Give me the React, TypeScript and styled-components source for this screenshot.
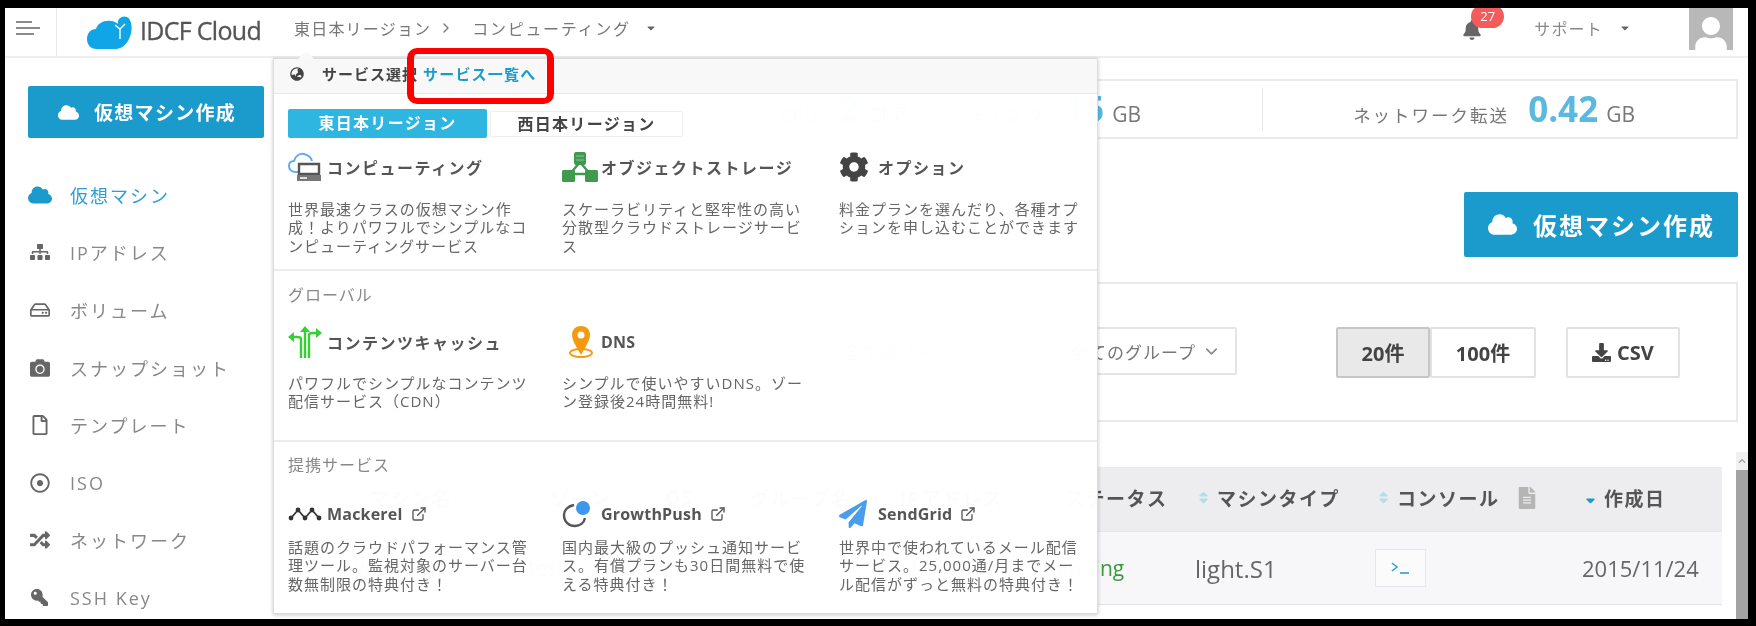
import * as React from 'react'
import styled, { createGlobalStyle } from 'styled-components'
import {
  FaBell,
  FaCamera,
  FaCaretDown,
  FaChevronUp,
  FaCloud,
  FaCog,
  FaDownload,
  FaFileAlt,
  FaGlobeAsia,
  FaKey,
  FaPaperPlane,
  FaRandom,
  FaRegDotCircle,
  FaRegFile,
  FaRegHdd,
  FaSitemap,
  FaSort,
  FaSortDown,
  FaUser,
} from 'react-icons/fa'
import { FiChevronDown, FiChevronRight, FiExternalLink } from 'react-icons/fi'

const GlobalStyle = createGlobalStyle`
  html, body {
    margin: 0;
    padding: 0;
    background: #000;
  }
  body {
    font-family: "Open Sans", "Noto Sans CJK JP", sans-serif;
    color: #666;
  }
  * { box-sizing: border-box; }
`

const Screen = styled.div`
  width: 1756px;
  height: 626px;
  padding: 8px 8px 7px 5px;
  background: #000;
  overflow: hidden;
`

const Frame = styled.div`
  position: relative;
  width: 1743px;
  height: 611px;
  background: #fff;
  overflow: hidden;
  filter: blur(0.4px);
`

/* header */
const Header = styled.header`
  display: flex;
  align-items: center;
  height: 50px;
  border-bottom: 2px solid #eee;
`

const MenuCell = styled.div`
  display: flex;
  flex-direction: column;
  gap: 4px;
  justify-content: center;
  width: 52px;
  height: 100%;
  padding: 0 0 8px 11px;
  border-right: 1px solid #e8e8e8;
`

const MenuBar = styled.span<{ $w: number }>`
  display: block;
  width: ${(p) => p.$w}px;
  height: 2px;
  background: #8a8a8a;
`

const Logo = styled.div`
  display: flex;
  align-items: center;
  margin-left: 30px;
  width: 207px;
  gap: 7px;
`

const LogoText = styled.span`
  position: relative;
  top: -2px;
  font-size: 25px;
  font-weight: 400;
  letter-spacing: -0.7px;
  color: #555;
  -webkit-text-stroke: 0.3px #555;
  white-space: nowrap;
`

const Crumbs = styled.div`
  display: flex;
  align-items: center;
  height: 100%;
  padding-bottom: 9px;
  font-size: 16px;
  letter-spacing: 1.2px;
  color: #777;
  white-space: nowrap;
`

const CrumbPart = styled.span<{ $wide?: boolean }>`
  letter-spacing: ${(p) => (p.$wide ? 1.7 : 1.2)}px;
`

const CrumbSep = styled.span`
  display: flex;
  margin: 0 18px 0 7px;
  font-size: 16px;
  color: #777;
`

const CrumbCaret = styled.span`
  display: flex;
  margin-left: 14px;
  font-size: 12px;
  color: #666;
`

const HeaderRight = styled.div`
  display: flex;
  align-items: center;
  margin-left: auto;
  height: 100%;
`

const Bell = styled.div`
  position: relative;
  top: -2px;
  display: flex;
  margin-right: 52px;
  color: #666;
  font-size: 20px;
`

const Badge = styled.span`
  position: absolute;
  left: 9px;
  top: -15px;
  width: 33px;
  height: 23px;
  border-radius: 12px;
  background: #f25c5c;
  color: #fff;
  font-size: 13px;
  line-height: 23px;
  text-align: center;
`

const Support = styled.div`
  display: flex;
  align-items: center;
  height: 100%;
  padding-bottom: 9px;
  font-size: 16px;
  letter-spacing: 1.2px;
  color: #888;
  svg { font-size: 12px; color: #666; margin-left: 16px; }
`

const Avatar = styled.div`
  display: flex;
  align-items: flex-end;
  justify-content: center;
  width: 44px;
  height: 42px;
  align-self: flex-start;
  margin: 0 15px 0 58px;
  background: #b8b8b8;
  color: #fff;
  font-size: 36px;
  overflow: hidden;
  svg { margin-bottom: -3px; }
`

/* body */
const Body = styled.div`
  display: flex;
  height: 561px;
`

const Sidebar = styled.nav`
  flex: 0 0 268px;
  padding: 28px 9px 0 23px;
`

const CreateButton = styled.div<{ $big?: boolean }>`
  display: flex;
  align-items: center;
  width: ${(p) => (p.$big ? 274 : 236)}px;
  height: ${(p) => (p.$big ? 65 : 52)}px;
  padding-left: ${(p) => (p.$big ? 24 : 30)}px;
  gap: ${(p) => (p.$big ? 16 : 15)}px;
  border-radius: 2px;
  background: #1a9bcb;
  color: #fff;
  font-size: ${(p) => (p.$big ? 24 : 19)}px;
  font-weight: 700;
  letter-spacing: ${(p) => (p.$big ? 2 : 1.3)}px;
  white-space: nowrap;
  svg { font-size: ${(p) => (p.$big ? 29 : 21)}px; }
`

const NavList = styled.ul`
  list-style: none;
  margin: 28px 0 0;
  padding: 0;
`

const NavItem = styled.li<{ $active?: boolean }>`
  display: flex;
  align-items: center;
  height: 57.6px;
  font-size: 18px;
  letter-spacing: 2px;
  color: ${(p) => (p.$active ? '#2a9fd0' : '#888')};
  white-space: nowrap;
`

const NavIcon = styled.span<{ $active?: boolean; $flip?: boolean }>`
  display: flex;
  justify-content: center;
  width: 24px;
  margin-right: 18px;
  font-size: ${(p) => (p.$active ? 24 : p.$flip ? 17 : 20)}px;
  color: ${(p) => (p.$active ? '#1a9bcb' : '#666')};
  transform: ${(p) => (p.$flip ? 'scaleX(-1)' : 'none')};
`

const Main = styled.main`
  flex: 1;
  padding: 21px 10px 0 27px;
  min-width: 0;
`

const Card = styled.section`
  border: 2px solid #eaeaea;
`

const StatsCard = styled(Card)`
  display: grid;
  grid-template-columns: 1fr 313px 473px;
  height: 60px;
  align-items: center;
`

const Stat = styled.div<{ $divider?: boolean; $pad: number }>`
  display: flex;
  align-items: baseline;
  justify-content: flex-end;
  height: 42px;
  padding-right: ${(p) => p.$pad}px;
  line-height: 42px;
  font-size: 17.5px;
  letter-spacing: 2px;
  color: #777;
  white-space: nowrap;
  border-right: ${(p) => (p.$divider ? '1px solid #e5e5e5' : 'none')};
`

const StatValue = styled.b`
  margin: 0 8px 0 19px;
  font-size: 35px;
  font-weight: 700;
  letter-spacing: 0;
  color: #5bb8de;
`

const StatUnit = styled.span`
  font-size: 21px;
  letter-spacing: 0;
`

const TitleRow = styled.div`
  display: flex;
  align-items: center;
  justify-content: space-between;
  margin: 53px 0 25px;
`

const PageTitle = styled.h1`
  margin: 0;
  padding-left: 20px;
  font-size: 34px;
  font-weight: 400;
  color: #555;
`

const FilterCard = styled(Card)`
  display: flex;
  align-items: flex-start;
  height: 140px;
  padding: 43px 56px 0 95px;
`

const SearchBox = styled.div`
  width: 395px;
  height: 48px;
  border: 2px solid #e5e5e5;
`

const Select = styled.div<{ $w: number }>`
  display: flex;
  align-items: center;
  justify-content: space-between;
  width: ${(p) => p.$w}px;
  height: 48px;
  margin-left: 10px;
  padding: 0 14px 0 40px;
  border: 2px solid #e5e5e5;
  border-radius: 2px;
  font-size: 17px;
  letter-spacing: 1px;
  color: #777;
  white-space: nowrap;
  svg { flex: none; font-size: 19px; color: #888; }
`

const Spacer = styled.div`
  flex: 1;
`

const PagerButton = styled.div<{ $active?: boolean; $w: number }>`
  display: flex;
  align-items: center;
  justify-content: center;
  gap: 6px;
  width: ${(p) => p.$w}px;
  height: 51px;
  border: 2px solid ${(p) => (p.$active ? '#c4c6c8' : '#e2e2e2')};
  border-radius: 2px;
  background: ${(p) => (p.$active ? '#e9e9e9' : '#fff')};
  font-size: 20px;
  font-weight: 700;
  color: #444;
  white-space: nowrap;
`

const CsvButton = styled(PagerButton)`
  margin-left: 30px;
  svg { font-size: 19px; }
`

const Table = styled.div`
  margin: 45px 16px 0 -2px;
`

const TableRow = styled.div<{ $head?: boolean }>`
  display: grid;
  grid-template-columns: 50px 180px 115px 85px 150px 165px 152px 180px 207px 138px;
  align-items: center;
  height: ${(p) => (p.$head ? 65 : 73)}px;
  background: ${(p) => (p.$head ? '#ededef' : '#f7f7f9')};
  border-bottom: 1px solid ${(p) => (p.$head ? '#e6e6e8' : '#e4e4e6')};
`

const HeadCell = styled.div`
  display: flex;
  align-items: center;
  gap: 6px;
  padding: 0 0 3px 1px;
  font-size: 19px;
  font-weight: 700;
  letter-spacing: 1.5px;
  color: #555;
  white-space: nowrap;
`

const SortMark = styled.span<{ $active?: boolean }>`
  display: flex;
  font-size: 15px;
  color: ${(p) => (p.$active ? '#1a9bcb' : '#b5dcea')};
`

const DocMark = styled.span`
  display: flex;
  margin-left: 10px;
  font-size: 22px;
  color: #b5b5b5;
`

const Cell = styled.div<{ $color?: string; $size?: number }>`
  font-size: ${(p) => p.$size ?? 21}px;
  color: ${(p) => p.$color ?? '#666'};
  white-space: nowrap;
`

const ConsoleButton = styled.div`
  display: flex;
  align-items: center;
  justify-content: center;
  width: 51px;
  height: 38px;
  border: 1px solid #e5e6e8;
  background: #fbfbfc;
`

const Scrollbar = styled.div`
  position: absolute;
  right: 0;
  top: 444px;
  width: 12px;
  height: 167px;
  background: #f1f1f1;
`

const ScrollArrow = styled.div`
  display: flex;
  justify-content: center;
  height: 18px;
  padding-top: 5px;
  font-size: 8px;
  color: #a0a0a0;
`

const ScrollThumb = styled.div`
  height: 149px;
  background: #a3a3a3;
`

/* dropdown */
const Panel = styled.div`
  position: absolute;
  left: 268px;
  top: 50px;
  width: 825px;
  height: 556px;
  border: 1px solid #ddd;
  background: rgba(255, 255, 255, 0.985);
  box-shadow: 0 1px 4px rgba(0, 0, 0, 0.22);
  &:before {
    content: '';
    position: absolute;
    left: 24px;
    top: -8px;
    border: 8px solid transparent;
    border-top: 0;
    border-bottom-color: #f9f9f9;
  }
`

const PanelStrip = styled.div`
  display: flex;
  align-items: center;
  height: 35px;
  padding: 0 0 5px 16px;
  background: #f8f8f8;
  border-bottom: 1px solid #e8e8e8;
  font-size: 15px;
  font-weight: 700;
  letter-spacing: 1px;
  color: #444;
  white-space: nowrap;
`

const Globe = styled.span`
  display: flex;
  margin-right: 18px;
  font-size: 14px;
  color: #444;
`

const ListLink = styled.span`
  margin-left: 5px;
  letter-spacing: 1.2px;
  color: #1a9bcb;
`

const RedBox = styled.div`
  position: absolute;
  left: 133px;
  top: -11px;
  width: 147px;
  height: 56px;
  border: solid #f00;
  border-width: 6px 7px;
  border-radius: 10px;
`

const PanelSection = styled.div<{ $top: number; $h: number; $last?: boolean }>`
  height: ${(p) => p.$h}px;
  padding: ${(p) => p.$top}px 0 0 14px;
  border-bottom: ${(p) => (p.$last ? 'none' : '2px solid #ececec')};
`

const Tabs = styled.div`
  display: flex;
  align-items: center;
  gap: 3px;
  margin-bottom: 15px;
`

const Tab = styled.div<{ $active?: boolean }>`
  width: ${(p) => (p.$active ? 199 : 193)}px;
  height: ${(p) => (p.$active ? 29 : 26)}px;
  border: ${(p) => (p.$active ? 'none' : '1px solid #eee')};
  border-radius: 2px;
  background: ${(p) => (p.$active ? '#2fb6e0' : '#fff')};
  color: ${(p) => (p.$active ? '#fff' : '#444')};
  font-size: 16px;
  font-weight: 700;
  letter-spacing: 1.3px;
  line-height: ${(p) => (p.$active ? 29 : 24)}px;
  text-align: center;
`

const SectionLabel = styled.div`
  height: 24px;
  font-size: 16px;
  line-height: 24px;
  letter-spacing: 1px;
  color: #888;
`

const ServiceGrid = styled.div<{ $top: number }>`
  display: grid;
  grid-template-columns: 274px 277px 240px;
  margin-top: ${(p) => p.$top}px;
`

const Service = styled.div``

const ServiceTitle = styled.div<{ $latin?: boolean }>`
  display: flex;
  align-items: center;
  height: 28px;
  font-size: 16px;
  font-weight: 700;
  letter-spacing: ${(p) => (p.$latin ? 0.2 : 1.5)}px;
  color: #555;
  white-space: nowrap;
  svg.ext {
    margin-left: 8px;
    font-size: 16px;
  }
`

const ServiceIcon = styled.span`
  display: flex;
  align-items: center;
  flex: 0 0 39px;
`

const ServiceText = styled.p<{ $gap: number }>`
  margin: ${(p) => p.$gap}px 0 0;
  font-size: 15px;
  line-height: 18.3px;
  letter-spacing: 1px;
  color: #666;
  white-space: pre-line;
`

const LogoMark = () => (
  <svg width="46" height="34" viewBox="0 0 46 34">
    <path
      fill="#0fa5e6"
      d="M10 34C3 34 0 29 0 24C0 18 4 14 9 14C11 8 17 5 24 6C27 6 30 8 31 9C30 3 36 0 40 2C46 5 46 18 41 26C37 32 33 34 28 34Z"
    />
    <path fill="none" stroke="#fff" strokeWidth="1.4" d="M28 10L33 14L38 9M33 14V24" />
  </svg>
)

const ComputeIcon = () => (
  <svg width="36" height="30" viewBox="0 0 36 30">
    <path
      fill="none"
      stroke="#63aeea"
      strokeWidth="2"
      d="M13 20H8C3 20 1 17 1 14C1 11 3 9 6 9C7 4 12 1 16 2C20 3 23 5 24 9"
    />
    <path fill="#fff" stroke="#555" strokeWidth="2.4" d="M11 12H31V22H11Z" />
    <path fill="#777" d="M9 23H33V29H9Z" />
    <path fill="#ddd" d="M12 25H19V27H12Z" />
  </svg>
)

const StorageIcon = () => (
  <svg width="36" height="30" viewBox="0 0 36 30">
    <path fill="none" stroke="#3f9a4d" strokeWidth="2.4" d="M18 10L8 22H28Z" />
    <rect x="12" y="0" width="12" height="13" rx="2" fill="#3f9a4d" />
    <path stroke="#8cc795" strokeWidth="1" d="M14 4H22M14 8H22" />
    <rect x="0" y="18" width="13" height="12" rx="1.5" fill="#3f9a4d" />
    <rect x="23" y="18" width="13" height="12" rx="1.5" fill="#3f9a4d" />
  </svg>
)

const CacheIcon = () => (
  <svg width="34" height="32" viewBox="0 0 34 32">
    <g fill="none" stroke="#35d035" strokeWidth="2.4">
      <path d="M13 32V13C13 11 11 11 9 11H4" />
      <path d="M17 32V3" />
      <path d="M21 32V9C21 7 23 7 25 7H29" />
    </g>
    <path fill="#35d035" d="M0 11L6 6V16ZM17 0L22 6H12ZM34 7L28 2V12Z" />
  </svg>
)

const PinIcon = () => (
  <svg width="32" height="32" viewBox="-6 0 32 32">
    <ellipse cx="13" cy="27" rx="11" ry="4" fill="none" stroke="#f59a10" strokeWidth="1.8" />
    <path
      fill="#f59a10"
      fillRule="evenodd"
      d="M13 0C7 0 4 4 4 9C4 15 10 23 13 29C16 23 22 15 22 9C22 4 19 0 13 0ZM13 5.5A3.5 3.5 0 1 1 13 12.5A3.5 3.5 0 1 1 13 5.5Z"
    />
  </svg>
)

const MackerelIcon = () => (
  <svg width="34" height="14" viewBox="0 0 34 14">
    <path fill="none" stroke="#333" strokeWidth="1.8" d="M3 11L10 3L17 11L24 3L31 11" />
    <g fill="#333">
      <circle cx="3" cy="11" r="2.4" />
      <circle cx="10" cy="3" r="2.4" />
      <circle cx="17" cy="11" r="2.4" />
      <circle cx="24" cy="3" r="2.4" />
      <circle cx="31" cy="11" r="2.4" />
    </g>
  </svg>
)

const GrowthIcon = () => (
  <svg width="30" height="28" viewBox="0 0 30 28">
    <path fill="none" stroke="#555" strokeWidth="2.4" d="M12 5C6 6 2 10 2 15C2 22 7 26 13 26C18 26 22 23 23 18" />
    <circle cx="21" cy="8" r="7" fill="#3c97ee" />
  </svg>
)

const PromptIcon = () => (
  <svg width="20" height="14" viewBox="0 0 20 14">
    <path fill="none" stroke="#2a9fd0" strokeWidth="1.5" d="M1 2L6 6L1 10" />
    <path stroke="#2a9fd0" strokeWidth="1.6" d="M9 12H18" />
  </svg>
)

const navItems = [
  { label: '仮想マシン', icon: <FaCloud />, active: true },
  { label: 'IPアドレス', icon: <FaSitemap /> },
  { label: 'ボリューム', icon: <FaRegHdd /> },
  { label: 'スナップショット', icon: <FaCamera /> },
  { label: 'テンプレート', icon: <FaRegFile /> },
  { label: 'ISO', icon: <FaRegDotCircle /> },
  { label: 'ネットワーク', icon: <FaRandom /> },
  { label: 'SSH Key', icon: <FaKey />, flip: true },
]

const services = [
  {
    title: 'コンピューティング',
    icon: <ComputeIcon />,
    text: '世界最速クラスの仮想マシン作\n成！よりパワフルでシンプルなコ\nンピューティングサービス',
  },
  {
    title: 'オブジェクトストレージ',
    icon: <StorageIcon />,
    text: 'スケーラビリティと堅牢性の高い\n分散型クラウドストレージサービ\nス',
  },
  {
    title: 'オプション',
    icon: <FaCog size={30} color="#444" />,
    text: '料金プランを選んだり、各種オプ\nションを申し込むことができます',
  },
]

const globalServices = [
  {
    title: 'コンテンツキャッシュ',
    icon: <CacheIcon />,
    text: 'パワフルでシンプルなコンテンツ\n配信サービス（CDN）',
  },
  {
    title: 'DNS',
    icon: <PinIcon />,
    text: 'シンプルで使いやすいDNS。ゾー\nン登録後24時間無料!',
  },
]

const partners = [
  {
    title: 'Mackerel',
    icon: <MackerelIcon />,
    text: '話題のクラウドパフォーマンス管\n理ツール。監視対象のサーバー台\n数無制限の特典付き！',
  },
  {
    title: 'GrowthPush',
    icon: <GrowthIcon />,
    text: '国内最大級のプッシュ通知サービ\nス。有償プランも30日間無料で使\nえる特典付き！',
  },
  {
    title: 'SendGrid',
    icon: <FaPaperPlane size={28} color="#4a9cee" />,
    text: '世界中で使われているメール配信\nサービス。25,000通/月までメー\nル配信がずっと無料の特典付き！',
  },
]

const headCells = ['マシン名', 'ゾーン', 'OS', 'グループ名', 'IPアドレス', 'ステータス', 'マシンタイプ']

type ServiceData = { title: string; icon: React.ReactNode; text: string }

function ServiceList({ items, top, gap, latin }: { items: ServiceData[]; top: number; gap: number; latin?: boolean }) {
  return (
    <ServiceGrid $top={top}>
      {items.map((s) => (
        <Service key={s.title}>
          <ServiceTitle $latin={latin || s.title === 'DNS'}>
            <ServiceIcon>{s.icon}</ServiceIcon>
            {s.title}
            {latin && <FiExternalLink className="ext" />}
          </ServiceTitle>
          <ServiceText $gap={gap}>{s.text}</ServiceText>
        </Service>
      ))}
    </ServiceGrid>
  )
}

export default function App() {
  return (
    <Screen>
      <GlobalStyle />
      <Frame>
        <Header>
          <MenuCell>
            <MenuBar $w={16} />
            <MenuBar $w={24} />
            <MenuBar $w={18} />
          </MenuCell>
          <Logo>
            <LogoMark />
            <LogoText>IDCF Cloud</LogoText>
          </Logo>
          <Crumbs>
            <CrumbPart>東日本リージョン</CrumbPart>
            <CrumbSep>
              <FiChevronRight />
            </CrumbSep>
            <CrumbPart $wide>コンピューティング</CrumbPart>
            <CrumbCaret>
              <FaCaretDown />
            </CrumbCaret>
          </Crumbs>
          <HeaderRight>
            <Bell>
              <FaBell />
              <Badge>27</Badge>
            </Bell>
            <Support>
              サポート
              <FaCaretDown />
            </Support>
            <Avatar>
              <FaUser />
            </Avatar>
          </HeaderRight>
        </Header>
        <Body>
          <Sidebar>
            <CreateButton>
              <FaCloud />
              仮想マシン作成
            </CreateButton>
            <NavList>
              {navItems.map((n) => (
                <NavItem key={n.label} $active={n.active}>
                  <NavIcon $active={n.active} $flip={n.flip}>
                    {n.icon}
                  </NavIcon>
                  {n.label}
                </NavItem>
              ))}
            </NavList>
          </Sidebar>
          <Main>
            <StatsCard>
              <Stat $divider $pad={40}>
                CPU<StatValue>2</StatValue>
                <StatUnit>コア</StatUnit>
              </Stat>
              <Stat $divider $pad={121}>
                ディスク<StatValue>15</StatValue>
                <StatUnit>GB</StatUnit>
              </Stat>
              <Stat $pad={101}>
                ネットワーク転送<StatValue>0.42</StatValue>
                <StatUnit>GB</StatUnit>
              </Stat>
            </StatsCard>
            <TitleRow>
              <PageTitle>仮想マシン</PageTitle>
              <CreateButton $big>
                <FaCloud />
                仮想マシン作成
              </CreateButton>
            </TitleRow>
            <FilterCard>
              <SearchBox />
              <Select $w={217}>
                全てのゾーン
                <FiChevronDown />
              </Select>
              <Select $w={208}>
                全てのグループ
                <FiChevronDown />
              </Select>
              <Spacer />
              <PagerButton $active $w={94}>
                20件
              </PagerButton>
              <PagerButton $w={106}>100件</PagerButton>
              <CsvButton $w={114}>
                <FaDownload />
                CSV
              </CsvButton>
            </FilterCard>
            <Table>
              <TableRow $head>
                <span />
                {headCells.map((h) => (
                  <HeadCell key={h}>
                    <SortMark>
                      <FaSort />
                    </SortMark>
                    {h}
                  </HeadCell>
                ))}
                <HeadCell>
                  <SortMark>
                    <FaSort />
                  </SortMark>
                  コンソール
                  <DocMark>
                    <FaFileAlt />
                  </DocMark>
                </HeadCell>
                <HeadCell>
                  <SortMark $active>
                    <FaSortDown />
                  </SortMark>
                  作成日
                </HeadCell>
              </TableRow>
              <TableRow>
                <span />
                <Cell>web01</Cell>
                <Cell>tesla</Cell>
                <Cell>CentOS</Cell>
                <Cell>default</Cell>
                <Cell>10.1.1.1</Cell>
                <Cell $color="#3a9a3a">Running</Cell>
                <Cell $size={24}>light.S1</Cell>
                <Cell>
                  <ConsoleButton>
                    <PromptIcon />
                  </ConsoleButton>
                </Cell>
                <Cell $size={22}>2015/11/24</Cell>
              </TableRow>
            </Table>
          </Main>
        </Body>
        <Scrollbar>
          <ScrollArrow>
            <FaChevronUp />
          </ScrollArrow>
          <ScrollThumb />
        </Scrollbar>
        <Panel>
          <PanelStrip>
            <Globe>
              <FaGlobeAsia />
            </Globe>
            サービス選択
            <ListLink>サービス一覧へ</ListLink>
          </PanelStrip>
          <RedBox />
          <PanelSection $top={15} $h={177}>
            <Tabs>
              <Tab $active>東日本リージョン</Tab>
              <Tab>西日本リージョン</Tab>
            </Tabs>
            <ServiceList items={services} top={0} gap={19} />
          </PanelSection>
          <PanelSection $top={12} $h={171}>
            <SectionLabel>グローバル</SectionLabel>
            <ServiceList items={globalServices} top={21} gap={18} />
          </PanelSection>
          <PanelSection $top={11} $h={172} $last>
            <SectionLabel>提携サービス</SectionLabel>
            <ServiceList items={partners} top={23} gap={10} latin />
          </PanelSection>
        </Panel>
      </Frame>
    </Screen>
  )
}
